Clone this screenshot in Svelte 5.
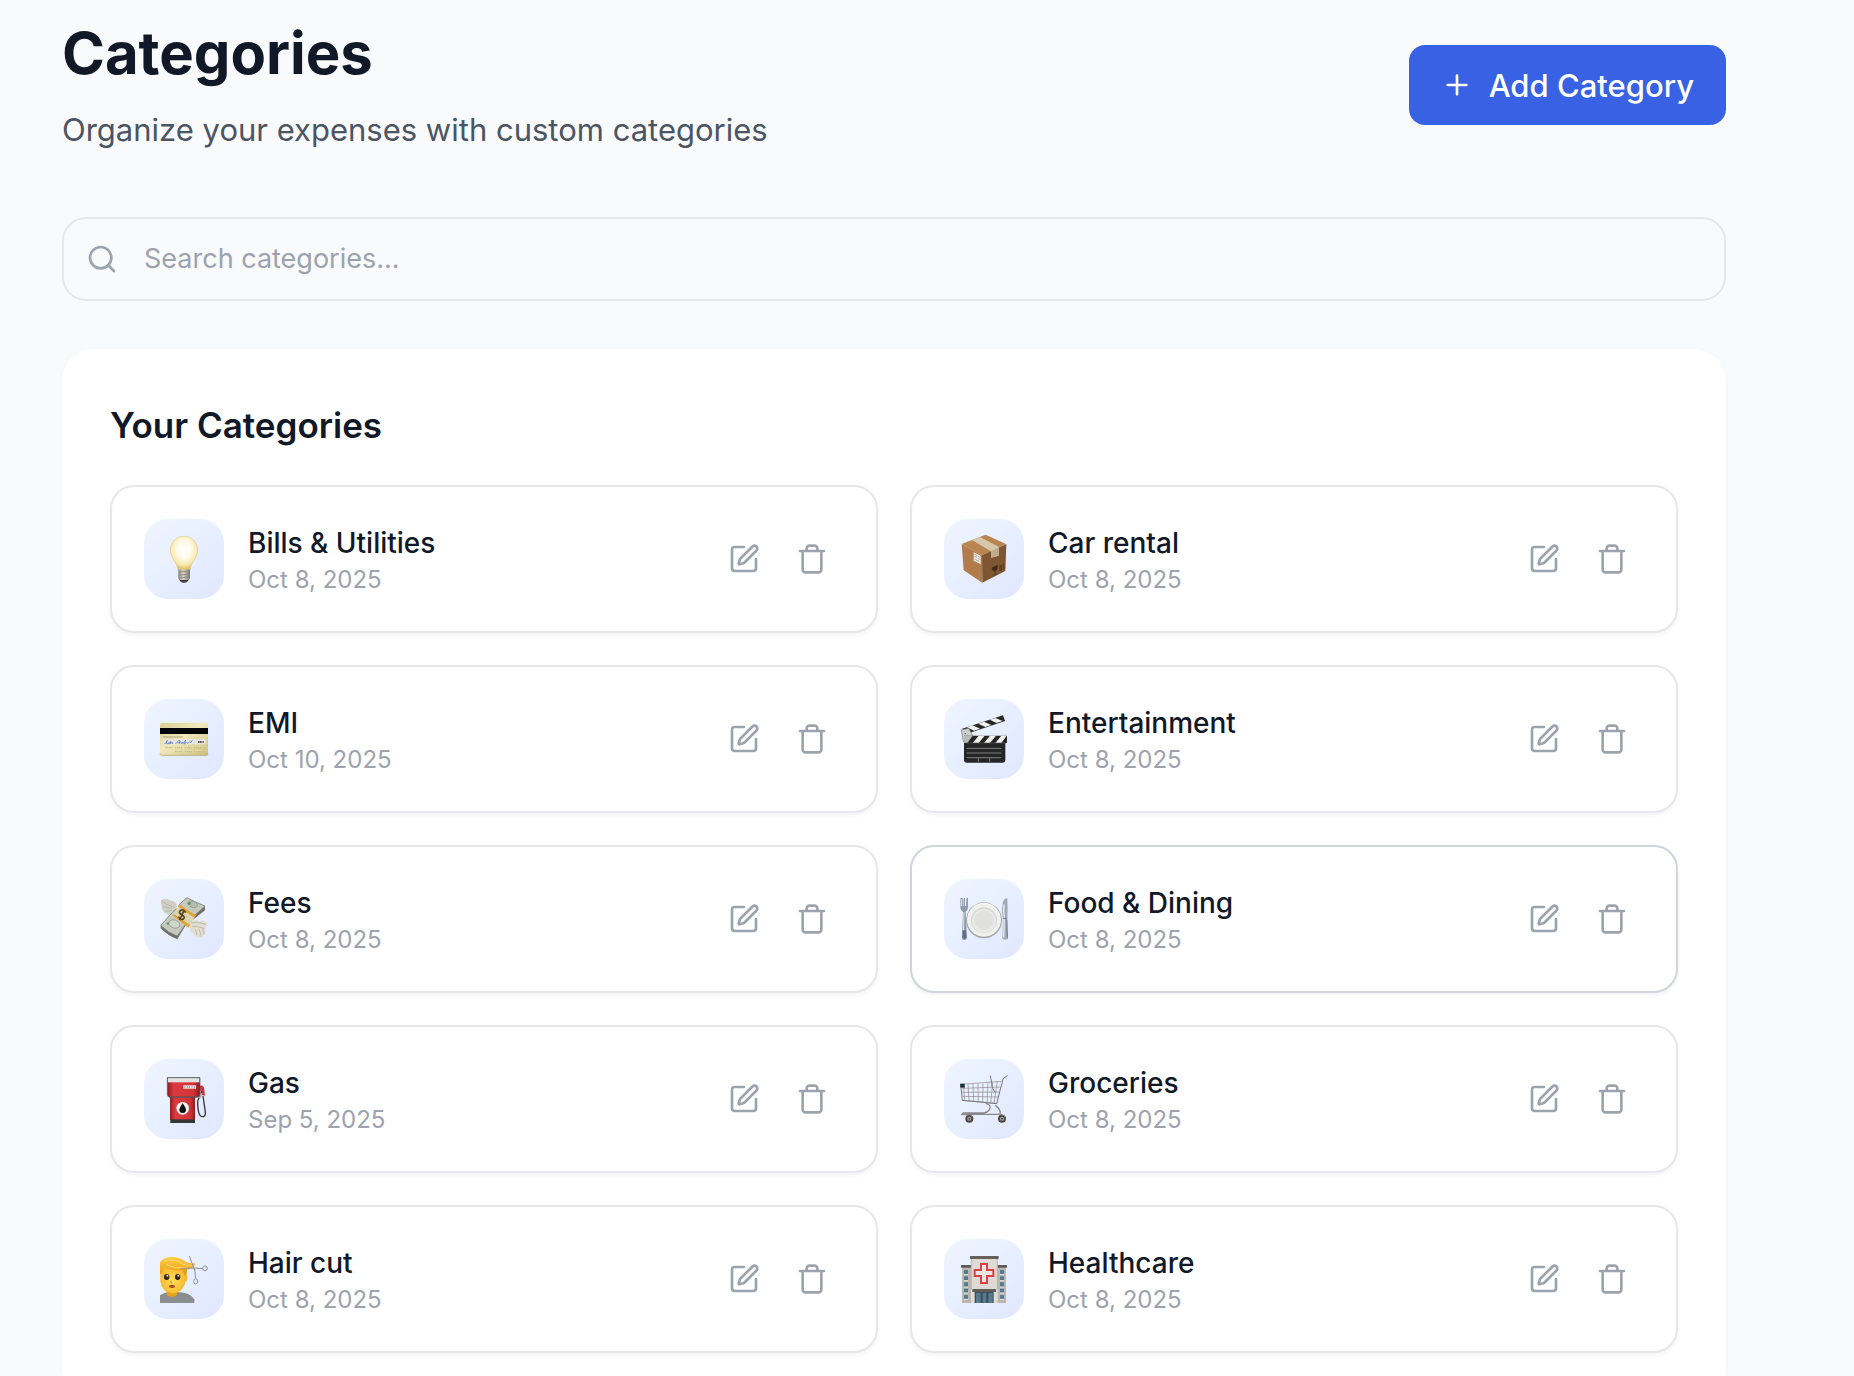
<script>
  let query = $state('');

  const categories = [
    { name: 'Bills & Utilities', date: 'Oct 8, 2025', icon: 'bulb' },
    { name: 'Car rental', date: 'Oct 8, 2025', icon: 'box' },
    { name: 'EMI', date: 'Oct 10, 2025', icon: 'card' },
    { name: 'Entertainment', date: 'Oct 8, 2025', icon: 'clapper' },
    { name: 'Fees', date: 'Oct 8, 2025', icon: 'money' },
    { name: 'Food & Dining', date: 'Oct 8, 2025', icon: 'plate', active: true },
    { name: 'Gas', date: 'Sep 5, 2025', icon: 'pump' },
    { name: 'Groceries', date: 'Oct 8, 2025', icon: 'cart' },
    { name: 'Hair cut', date: 'Oct 8, 2025', icon: 'hair' },
    { name: 'Healthcare', date: 'Oct 8, 2025', icon: 'hospital' }
  ];

  const shown = $derived(
    categories.filter((c) => c.name.toLowerCase().includes(query.trim().toLowerCase()))
  );
</script>

{#snippet picture(icon)}
  {#if icon === 'bulb'}
    <svg viewBox="132 147 240 240" aria-hidden="true">
      <defs>
        <radialGradient id="glass" cx=".5" cy=".4" r=".58">
          <stop offset="0" stop-color="#fffffc" /><stop offset=".45" stop-color="#fffbea" />
          <stop offset=".8" stop-color="#f8e9b0" /><stop offset="1" stop-color="#dfc168" />
        </radialGradient>
        <linearGradient id="screw"><stop offset="0" stop-color="#8d8780" /><stop offset=".4" stop-color="#d8d4cd" /><stop offset="1" stop-color="#817b74" /></linearGradient>
      </defs>
      <path d="M236 328h32l-7 8q-9 5-18 0z" fill="#3f3c3a" />
      <path d="M235 295h35v28q0 5-5 7h-25q-5-2-5-7z" fill="url(#screw)" />
      <path d="M236 306l33-3M236 315l33-3M237 324l31-3" stroke="#77716b" stroke-width="2" />
      <path d="M252 199c23 0 41 18 41 41 0 25-19 34-22 56q-19 5-38 0c-3-22-22-31-22-56 0-23 18-41 41-41z" fill="url(#glass)" stroke="#e6cd80" stroke-width="2" />
    </svg>
  {:else if icon === 'box'}
    <svg viewBox="732 -3 240 240" aria-hidden="true">
      <path d="M785 72l72-28 61 28-72 34z" fill="#b98550" />
      <path d="M785 72l61 34 1 82-56-37z" fill="#b17b4b" />
      <path d="M846 106l73-34-3 81-69 35z" fill="#7f5632" />
      <path d="M816 60l24-9 56 29v27l-23 6V94z" fill="#d8c6ac" />
      <path d="M873 94l23-12v25l-23 6z" fill="#c0ab8d" />
      <path d="M821 97l21 10v26l-21-11z" fill="#e9e5df" />
      <path d="M824 103l7 3M824 109l7 3M834 109l5 2M834 116l5 2M825 118l12 6" stroke="#8b8680" stroke-width="2" />
      <path d="M876 144l16-8q1 14-7 17-8 1-9-9zm9 9v10m-5 3l10-5" fill="#3f2a18" stroke="#3f2a18" stroke-width="2" />
      <path d="M900 136v18m4-20v18m7-22v18" stroke="#54381f" stroke-width="3" />
    </svg>
  {:else if icon === 'card'}
    <svg viewBox="12 12 240 240" aria-hidden="true">
      <defs><linearGradient id="gold" x2="1" y2="1"><stop offset="0" stop-color="#d9cf92" /><stop offset=".45" stop-color="#f0e9bd" /><stop offset="1" stop-color="#cdc07c" /></linearGradient></defs>
      <rect x="60" y="84" width="144" height="97" rx="5" fill="url(#gold)" />
      <path d="M60 176q0 5 5 5h134q5 0 5-5" fill="none" stroke="#a89b5b" stroke-width="2" />
      <path d="M60 99h144v18H60z" fill="#050505" />
      <path d="M70 126h60" stroke="#8c8455" stroke-width="3" stroke-dasharray="4 2" />
      <path d="M69 133h128v15H69z" fill="#e6e5e2" />
      <path d="M73 146q9 0 9-10-6 8-2 10t7-4q-3 6 1 5l4-8-1 8 6-6v6M106 147l12-12 1 12m-8-4h9q4-8 4 3l5-5v5l8-11-4 12 7-5 4 3 5-5 3 4 5-9" fill="none" stroke="#5a76ba" stroke-width="2" />
      <path d="M174 141h17" stroke="#333" stroke-width="5" stroke-dasharray="4 1" />
      <path d="M76 157h120M106 169h90" stroke="#c2b988" stroke-width="5" stroke-dasharray="4 2 3 2 5 2 3 8" />
      <path d="M77 155h120M107 167h90" stroke="#f8f3d0" stroke-width="2" stroke-dasharray="4 2 3 2 5 2 3 8" />
    </svg>
  {:else if icon === 'clapper'}
    <svg viewBox="12 12 240 240" aria-hidden="true">
      <path d="M62 103l127-42 6 17L70 120z" fill="#282828" />
      <path d="M81 97l17-6 22 10-18 6zM115 86l17-6 22 10-18 6zM149 74l17-5 22 9-18 6zM62 103l5-2 18 13-17 6z" fill="#f1f1ef" />
      <path d="M64 105l22-5 16 28-6 12H70z" fill="#cfcfcd" stroke="#777" stroke-width="2" />
      <circle cx="76" cy="116" r="2" fill="#555" /><circle cx="91" cy="128" r="2" fill="#555" /><circle cx="76" cy="131" r="2" fill="#555" />
      <path d="M72 138h124v56q0 9-9 9H81q-9 0-9-9z" fill="#252525" />
      <path d="M72 122h129v22H72z" fill="#242424" />
      <path d="M116 122h18l-18 22H98zM150 122h18l-18 22h-18zM184 122h16l-16 22h-18z" fill="#f1f1ef" />
      <path d="M72 122h26l-16 22H72z" fill="#bbb" />
      <path d="M79 160h105M79 174h105M79 188h105M115 189v12M149 189v12" stroke="#aaa" stroke-width="2" />
      <path d="M72 144h126" stroke="#555" stroke-width="2" />
    </svg>
  {:else if icon === 'money'}
    <svg viewBox="12 12 240 240" aria-hidden="true">
      <path d="M64 75q15-8 26 1 14 2 20 12l2 16-18 16q-14 2-16-5-9-1-8-8-7-4-4-12-6-9-2-20z" fill="#d3d1c6" />
      <path d="M64 76q12 14 38 19M68 94q13 6 28 5M76 108q10 3 20-3" fill="none" stroke="#a7a498" stroke-width="2" />
      <path d="M62 151l44-48q24 19 48 20l-42 70q-26-9-50-33z" fill="#77786f" />
      <path d="M62 151l44-48q24 19 48 20l-42 60q-25-7-50-32z" fill="#c6c9be" stroke="#777a70" stroke-width="2" />
      <path d="M66 158q22 21 46 28M67 162q20 20 44 27" fill="none" stroke="#595c55" />
      <path d="M118 88l23-20q25 14 54 25v13l-38 30z" fill="#6f7169" />
      <path d="M118 88l23-20q25 14 54 25l-35 32z" fill="#c6cabd" stroke="#76796d" stroke-width="2" />
      <ellipse cx="158" cy="88" rx="15" ry="9" transform="rotate(20 158 88)" fill="#b6beae" stroke="#8a9185" stroke-width="2" />
      <circle cx="148" cy="85" r="5" fill="#61967a" />
      <ellipse cx="103" cy="147" rx="17" ry="12" transform="rotate(20 103 147)" fill="#d3d6cb" stroke="#8b9284" stroke-width="2" />
      <circle cx="84" cy="146" r="4" fill="#72917d" />
      <path d="M118 89l49 32-21 37-48-36z" fill="#dcd5b0" />
      <path d="M118 89l49 32-4 7-50-34zM102 117l48 33-4 8-48-36z" fill="#e2a431" />
      <path d="M137 113q-8-13-16-6-7 7 5 13 11 6 4 12-8 5-15-7M132 106l-13 29" fill="none" stroke="#574216" stroke-width="5" />
      <path d="M150 142q14-13 27-3 14-7 24 6-1 10-6 14 4 8-2 14 4 6-3 10-4 9-15 4-11 1-14-10-10-3-11-13z" fill="#e1dfd4" />
      <path d="M152 143q23-4 46 5M156 154q19-1 38 7M165 162q5 8 5 18M177 163q6 8 4 21M188 162q5 7 4 17" fill="none" stroke="#aaa799" stroke-width="2" />
    </svg>
  {:else if icon === 'plate'}
    <svg viewBox="12 12 240 240" aria-hidden="true">
      <circle cx="132" cy="136" r="54" fill="#a5a7aa" /><circle cx="132" cy="134" r="51" fill="#f0f0ee" />
      <circle cx="132" cy="136" r="39" fill="#d3d4d4" /><circle cx="132" cy="137" r="36" fill="#e9e9e7" />
      <circle cx="132" cy="136" r="29" fill="#e0e0df" />
      <path d="M66 70v26q0 8 7 8t8-8V70M73 70v32" fill="none" stroke="#7f8b9c" stroke-width="4" />
      <path d="M61 69v26q0 11 8 15l-3 78q0 7 7 7t8-7l-4-78q7-4 7-15V69h-3v24h-6V69h-3v24h-5V69z" fill="#8d9aab" />
      <path d="M72 112l-2 72M64 72v22" stroke="#e4ebf3" stroke-width="3" />
      <path d="M68 166l-1 22q6 6 12 0l-1-22" fill="#606f82" />
      <path d="M188 84q3-13 14-15 2 28 0 61l2 61q-9 6-17 0l2-61q-5-15-1-46z" fill="#a3abb6" />
      <path d="M192 88q-3 22 1 38l-2 61" fill="none" stroke="#e9edf2" stroke-width="4" />
      <path d="M188 130h13M200 134l2 54" stroke="#6e7885" stroke-width="3" />
    </svg>
  {:else if icon === 'pump'}
    <svg viewBox="12 12 240 240" aria-hidden="true">
      <defs><linearGradient id="red"><stop offset="0" stop-color="#8e1c20" /><stop offset=".2" stop-color="#dc3a3e" /><stop offset=".8" stop-color="#d23237" /><stop offset="1" stop-color="#8e1b20" /></linearGradient></defs>
      <path d="M179 92q10-3 13 6l3 24-10-2-4-13z" fill="#cf3439" />
      <path d="M186 109l-13 29q-1 13 3 34 4 14 14 13 7-2 6-14l-7-48" fill="none" stroke="#343638" stroke-width="4" />
      <path d="M180 112l7 3-5 15-7-2z" fill="#a4a7a9" />
      <path d="M90 125h75v70H90z" fill="url(#red)" />
      <path d="M82 68h98v49q0 10-9 10H91q-9 0-9-10z" fill="url(#red)" stroke="#54575a" stroke-width="2" />
      <path d="M84 68h94v14H84z" fill="#e3e3e2" /><path d="M82 68h98" stroke="#686b6e" stroke-width="3" />
      <path d="M130 91h38v10h-38z" fill="#eee" /><path d="M134 96h32" stroke="#7b6263" stroke-width="6" stroke-dasharray="2 5" />
      <path d="M87 126h82" stroke="#53575a" stroke-width="3" />
      <path d="M91 193h74v11H91z" fill="#343638" />
      <circle cx="128" cy="160" r="19" fill="#f1f1ef" />
      <path d="M128 145q10 14 10 20 0 9-10 9t-10-9q0-6 10-20z" fill="#111" />
    </svg>
  {:else if icon === 'cart'}
    <svg viewBox="12 12 240 240" aria-hidden="true">
      <path d="M64 88l119-9M67 100l114-4M67 112l111-1M68 124l106 2M67 136l102 9M70 90l4 46M84 88l3 49M99 87l2 52M114 86l1 55M129 85l-1 57M144 83l-3 61M158 82l-6 63M172 80l-10 65" fill="none" stroke="#898786" stroke-width="2" />
      <path d="M62 88l5 48 103 10 19-74q5-5 13-10M151 63q4 16 5 31l8 17" fill="none" stroke="#7b7877" stroke-width="3" stroke-linecap="round" />
      <path d="M137 145q18 4 12 18-7 10-17 11H70l-5 5 22-1h93q4-15-14-27" fill="none" stroke="#8a8786" stroke-width="4" stroke-linejoin="round" />
      <path d="M61 86h13v11H61z" fill="#17313b" /><path d="M62 96h13" stroke="#111" stroke-width="2" />
      <circle cx="88" cy="191" r="12" fill="#4d4542" /><circle cx="88" cy="191" r="6" fill="#b2aaa6" /><circle cx="88" cy="191" r="3" fill="#514946" />
      <circle cx="186" cy="191" r="12" fill="#4d4542" /><circle cx="186" cy="191" r="6" fill="#b2aaa6" /><circle cx="186" cy="191" r="3" fill="#514946" />
      <path d="M80 181q9-7 17 4M177 181q9-7 18 5" fill="none" stroke="#8a8786" stroke-width="3" />
    </svg>
  {:else if icon === 'hair'}
    <svg viewBox="12 12 240 240" aria-hidden="true">
      <defs>
        <radialGradient id="skin" cx=".5" cy=".55" r=".6"><stop offset="0" stop-color="#ffdd55" /><stop offset="1" stop-color="#f4b429" /></radialGradient>
        <linearGradient id="hairTone" x2="0" y2="1"><stop offset="0" stop-color="#ffcf45" /><stop offset="1" stop-color="#ec9c1c" /></linearGradient>
      </defs>
      <path d="M60 204v-23q13-9 26-10h22q42 0 55 22v11z" fill="#8b8e91" />
      <path d="M80 168h31v12q-15 12-31 0z" fill="#e5a41d" />
      <ellipse cx="136" cy="129" rx="6" ry="11" fill="#f2b52a" />
      <path d="M61 98q4-8 12-8h55q8 8 8 22v26q-4 35-40 37-30-3-35-35z" fill="url(#skin)" />
      <path d="M128 98h13q1 14-3 24l-5-3q-5-9-5-21z" fill="#e39a1f" />
      <path d="M60 118V82q10-15 32-16 28-1 46 14 16 9 28 3-2 16-20 20-28 5-50 2-16-2-24-12-1 15-12 25z" fill="url(#hairTone)" />
      <path d="M72 79q28-11 56 8 16 9 31 4M78 89q26 13 55 10" fill="none" stroke="#ffdb68" stroke-width="3" />
      <ellipse cx="80" cy="126" rx="8" ry="9" fill="#332219" /><ellipse cx="113" cy="126" rx="8" ry="9" fill="#332219" />
      <circle cx="82" cy="122" r="3" fill="#fff" /><circle cx="115" cy="122" r="3" fill="#fff" />
      <path d="M94 137q-5 7 3 6" fill="none" stroke="#d28b20" stroke-width="3" />
      <ellipse cx="96" cy="154" rx="9" ry="5" fill="#a34d20" />
      <path d="M148 63l16 43M122 102l40-3 27 2M164 101l3 29" fill="none" stroke="#8d9297" stroke-width="3" />
      <circle cx="195" cy="100" r="7" fill="none" stroke="#8d9297" stroke-width="3" /><ellipse cx="167" cy="139" rx="6" ry="8" fill="none" stroke="#8d9297" stroke-width="3" />
    </svg>
  {:else}
    <svg viewBox="12 12 240 240" aria-hidden="true">
      <path d="M66 94h30v110H66zM168 94h30v110h-30z" fill="#bbb6ae" />
      <path d="M63 90h34v8H63zM168 90h33v8h-33z" fill="#615a59" />
      <path d="M93 68h80v136H93z" fill="#dedbd5" />
      <path d="M90 63h86v9H90z" fill="#665e5d" />
      <path d="M94 72v90M172 72v90" stroke="#aaa59d" stroke-width="2" />
      <path d="M72 105h12v14H72zm0 19h12v13H72zm0 18h12v14H72zm0 19h12v13H72zm0 19h12v13H72zM180 105h12v14h-12zm0 19h12v13h-12zm0 18h12v14h-12zm0 19h12v13h-12zm0 19h12v13h-12z" fill="#517c92" />
      <path d="M72 119h12m-12 18h12m-12 19h12m-12 18h12m-12 19h12m96-74h12m-12 18h12m-12 19h12m-12 18h12m-12 19h12" stroke="#eeeae4" stroke-width="3" />
      <path d="M104 168h57v36h-57z" fill="#354f60" />
      <path d="M108 174h14v30h-14zM128 174h11v30h-11zM145 174h13v30h-13z" fill="#597a8d" />
      <path d="M97 162h71v9H97z" fill="#625b59" />
      <path d="M123 87h18v18h19v18h-19v21h-18v-21h-19v-18h19z" fill="#eae6e1" stroke="#d94045" stroke-width="6" />
    </svg>
  {/if}
{/snippet}

<main class="page">
  <header class="top">
    <div class="heading">
      <h1>Categories</h1>
      <p>Organize your expenses with custom categories</p>
    </div>
    <button class="add" type="button">
      <svg class="line-icon" viewBox="0 0 24 24" aria-hidden="true"><path d="M5 12h14M12 5v14" /></svg>
      Add Category
    </button>
  </header>

  <label class="search">
    <svg class="line-icon" viewBox="0 0 24 24" aria-hidden="true"><circle cx="11" cy="11" r="8" /><path d="m21 21-4.3-4.3" /></svg>
    <input type="text" aria-label="Search categories" placeholder="Search categories..." bind:value={query} />
  </label>

  <section class="panel" aria-labelledby="list-title">
    <h2 id="list-title">Your Categories</h2>
    <ul class="grid">
      {#each shown as item (item.name)}
        <li class="item" class:active={item.active}>
          <div class="tile">{@render picture(item.icon)}</div>
          <div class="text">
            <h3>{item.name}</h3>
            <p>{item.date}</p>
          </div>
          <div class="actions">
            <button type="button" aria-label={`Edit ${item.name}`}>
              <svg class="line-icon" viewBox="0 0 24 24" aria-hidden="true">
                <path d="M12 3H5a2 2 0 0 0-2 2v14a2 2 0 0 0 2 2h14a2 2 0 0 0 2-2v-7" />
                <path d="M18.375 2.625a1 1 0 0 1 3 3l-9.013 9.014a2 2 0 0 1-.853.505l-2.873.84a.5.5 0 0 1-.62-.62l.84-2.873a2 2 0 0 1 .506-.852z" />
              </svg>
            </button>
            <button type="button" aria-label={`Delete ${item.name}`}>
              <svg class="line-icon" viewBox="0 0 24 24" aria-hidden="true">
                <path d="M3 6h18M19 6v14c0 1-1 2-2 2H7c-1 0-2-1-2-2V6M8 6V4c0-1 1-2 2-2h4c1 0 2 1 2 2v2" />
              </svg>
            </button>
          </div>
        </li>
      {/each}
    </ul>
  </section>
</main>

<style>
  :global(body) {
    margin: 0;
    background: #f9fafc;
  }

  .page {
    box-sizing: border-box;
    height: 100vh;
    overflow-y: auto;
    scrollbar-width: none;
    padding: 16px 128px 48px 62px;
    font-family: Inter, 'Liberation Sans', sans-serif;
    color: #111827;
  }

  h1,
  h2,
  h3,
  p,
  ul {
    margin: 0;
    padding: 0;
  }

  button {
    border: 0;
    font: inherit;
    cursor: pointer;
  }

  .line-icon {
    display: block;
    flex: none;
    width: 32px;
    height: 32px;
    fill: none;
    stroke: currentColor;
    stroke-width: 2;
    stroke-linecap: round;
    stroke-linejoin: round;
  }

  .top {
    display: flex;
    align-items: center;
    justify-content: space-between;
    gap: 32px;
    margin-bottom: 63px;
  }

  h1 {
    font-size: 58px;
    line-height: 74px;
    font-weight: 700;
  }

  .heading p {
    margin-top: 16px;
    font-size: 31px;
    line-height: 48px;
    color: #4b5563;
  }

  .add {
    display: flex;
    align-items: center;
    gap: 16px;
    height: 80px;
    padding: 0 32px;
    border-radius: 16px;
    background: #3862e3;
    color: #fff;
    font-size: 31px;
    font-weight: 500;
    white-space: nowrap;
  }

  .search {
    display: flex;
    align-items: center;
    gap: 26px;
    box-sizing: border-box;
    height: 84px;
    padding: 0 22px;
    margin-bottom: 48px;
    border: 2px solid #e5e7eb;
    border-radius: 24px;
    color: #9ca3af;
  }

  .search input {
    flex: 1;
    min-width: 0;
    padding: 0;
    border: 0;
    outline: 0;
    background: transparent;
    font: inherit;
    font-size: 27px;
    line-height: 40px;
    color: #111827;
  }

  .search input::placeholder {
    color: #9ca3af;
    opacity: 1;
  }

  .panel {
    padding: 48px;
    border-radius: 32px;
    background: #fff;
    box-shadow: 0 2px 4px rgba(0, 0, 0, 0.03);
  }

  h2 {
    margin-bottom: 32px;
    font-size: 35px;
    line-height: 56px;
    font-weight: 600;
  }

  .grid {
    display: grid;
    grid-template-columns: repeat(2, minmax(0, 1fr));
    gap: 32px;
    list-style: none;
  }

  .item {
    display: flex;
    align-items: center;
    gap: 24px;
    padding: 32px;
    border: 2px solid #e5e7eb;
    border-radius: 24px;
    background: #fff;
    box-shadow: 0 2px 4px rgba(0, 0, 0, 0.05);
  }

  .item.active {
    border-color: #d1d5db;
  }

  .tile {
    flex: none;
    width: 80px;
    height: 80px;
    border-radius: 24px;
    background: linear-gradient(135deg, #eff6ff, #e0e7ff);
  }

  .tile svg {
    display: block;
    width: 100%;
    height: 100%;
  }

  .text {
    flex: 1;
    min-width: 0;
  }

  h3 {
    font-size: 28px;
    line-height: 42px;
    font-weight: 500;
  }

  .text p {
    font-size: 24px;
    line-height: 32px;
    color: #9ca3af;
  }

  .actions {
    display: flex;
    gap: 4px;
  }

  .actions button {
    padding: 16px;
    border-radius: 16px;
    background: transparent;
    color: #9ca3af;
  }
</style>
